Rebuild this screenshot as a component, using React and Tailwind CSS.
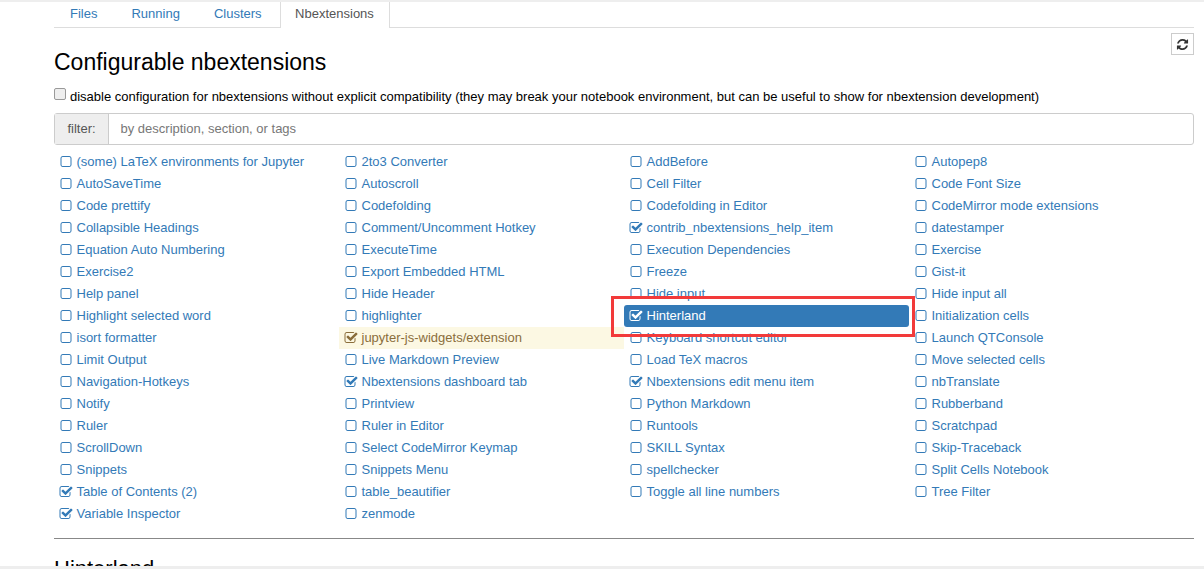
import React from "react";

const cols = [
  ["(some) LaTeX environments for Jupyter","AutoSaveTime","Code prettify","Collapsible Headings","Equation Auto Numbering","Exercise2","Help panel","Highlight selected word","isort formatter","Limit Output","Navigation-Hotkeys","Notify","Ruler","ScrollDown","Snippets","Table of Contents (2)","Variable Inspector"],
  ["2to3 Converter","Autoscroll","Codefolding","Comment/Uncomment Hotkey","ExecuteTime","Export Embedded HTML","Hide Header","highlighter","jupyter-js-widgets/extension","Live Markdown Preview","Nbextensions dashboard tab","Printview","Ruler in Editor","Select CodeMirror Keymap","Snippets Menu","table_beautifier","zenmode"],
  ["AddBefore","Cell Filter","Codefolding in Editor","contrib_nbextensions_help_item","Execution Dependencies","Freeze","Hide input","Hinterland","Keyboard shortcut editor","Load TeX macros","Nbextensions edit menu item","Python Markdown","Runtools","SKILL Syntax","spellchecker","Toggle all line numbers"],
  ["Autopep8","Code Font Size","CodeMirror mode extensions","datestamper","Exercise","Gist-it","Hide input all","Initialization cells","Launch QTConsole","Move selected cells","nbTranslate","Rubberband","Scratchpad","Skip-Traceback","Split Cells Notebook","Tree Filter"],
];
const checked = new Set(["Table of Contents (2)","Variable Inspector","jupyter-js-widgets/extension","Nbextensions dashboard tab","contrib_nbextensions_help_item","Hinterland","Nbextensions edit menu item"]);

const SQUARE = "M1312 256h-832q-66 0-113 47t-47 113v832q0 66 47 113t113 47h832q66 0 113-47t47-113v-832q0-66-47-113t-113-47zm288 160v832q0 119-84.5 203.5t-203.5 84.5h-832q-119 0-203.5-84.5t-84.5-203.5v-832q0-119 84.5-203.5t203.5-84.5h832q119 0 203.5 84.5t84.5 203.5z";
const CHECK = "M1472 930v318q0 119-84.5 203.5t-203.5 84.5h-832q-119 0-203.5-84.5t-84.5-203.5v-832q0-119 84.5-203.5t203.5-84.5h832q63 0 117 25 15 7 18 23 3 17-9 29l-49 49q-10 10-23 10-3 0-9-2-23-6-45-6h-832q-66 0-113 47t-47 113v832q0 66 47 113t113 47h832q66 0 113-47t47-113v-254q0-13 9-22l64-64q10-10 23-10 6 0 12 3 20 8 20 29zm231-489l-814 814q-24 24-57 24t-57-24l-430-430q-24-24-24-57t24-57l110-110q24-24 57-24t57 24l263 263 647-647q24-24 57-24t57 24l110 110q24 24 24 57t-24 57z";
const REFRESH = "M1639 1056q0 5-1 7-64 268-268 434.5t-478 166.5q-146 0-282.5-55t-243.5-157l-129 129q-19 19-45 19t-45-19-19-45v-448q0-26 19-45t45-19h448q26 0 45 19t19 45-19 45l-137 137q71 66 161 102t187 36q134 0 250-65t186-179q11-17 53-117 8-23 30-23h192q13 0 22.5 9.5t9.5 22.5zm25-800v448q0 26-19 45t-45 19h-448q-26 0-45-19t-19-45 19-45l138-138q-148-137-349-137-134 0-250 65t-186 179q-11 17-53 117-8 23-30 23h-199q-13 0-22.5-9.5t-9.5-22.5v-7q65-268 270-434.5t480-166.5q146 0 284 55.5t245 156.5l130-129q19-19 45-19t45 19 19 45z";

function Glyph({ d, className }) {
  return (
    <svg viewBox="0 0 1792 1792" fill="currentColor" className={className}>
      <path d={d} />
    </svg>
  );
}

function Item({ name }) {
  const on = checked.has(name);
  const active = name === "Hinterland";
  const warn = name === "jupyter-js-widgets/extension";
  const tone = active ? "bg-[#337ab7] text-white rounded-[3px]" : warn ? "bg-[#fcf8e3] text-[#8a6d3b]" : "text-[#337ab7]";
  return (
    <div className={`h-[22px] flex items-center pl-[4.5px] text-[13px] leading-[22px] whitespace-nowrap ${tone}`}>
      <span className="w-[18px] shrink-0 flex items-center -mt-[1px]">
        <Glyph d={on ? CHECK : SQUARE} className="w-[14px] h-[14px]" />
      </span>
      <span>{name}</span>
    </div>
  );
}

export default function App() {
  return (
    <div className="relative w-[1204px] h-[569px] overflow-hidden bg-white border-t-2 border-[#eeeeee] font-['Liberation_Sans',Arial,sans-serif] text-black">
      <div className="ml-[54px] w-[1140px]">
        <div className="flex h-[26px] border-b border-[#dddddd] text-[13px] text-[#337ab7]">
          <div className="pl-[16px] pr-[17px] pt-[2px]">Files</div>
          <div className="px-[17px] pt-[2px]">Running</div>
          <div className="px-[17px] pt-[2px]">Clusters</div>
          <div className="ml-[1.5px] h-[26px] pl-[14px] pr-[15px] pt-[2px] bg-white border-x border-[#dddddd] text-[#555555]">Nbextensions</div>
        </div>
        <div className="flex justify-end pt-[5px] h-[27px]">
          <div className="w-[23px] h-[22px] border border-[#cccccc] flex items-center justify-center text-[#333333]">
            <Glyph d={REFRESH} className="w-[13px] h-[13px]" />
          </div>
        </div>
        <h1 className="m-0 text-[23px] leading-[28px] font-normal -mt-[7px]">Configurable nbextensions</h1>
        <div className="flex items-center mt-[12px] h-[18px] text-[13px]">
          <span className="w-[12px] h-[12px] -mt-[6px] rounded-[2px] border border-[#999999] bg-[#eeeeee] mr-[4px]" />
          <span>disable configuration for nbextensions without explicit compatibility (they may break your notebook environment, but can be useful to show for nbextension development)</span>
        </div>
        <div className="flex h-[32px] mt-[7px] border border-[#cccccc] rounded-[3px] text-[13px]">
          <div className="w-[54px] bg-[#eeeeee] border-r border-[#cccccc] text-[#555555] flex items-center justify-center">filter:</div>
          <div className="pl-[11.5px] text-[#777777] flex items-center">by description, section, or tags</div>
        </div>
        <div className="grid grid-cols-[285px_285px_285px_285px] mt-[6px]">
          {cols.map((c, i) => (
            <div key={i}>{c.map((n) => <Item key={n} name={n} />)}</div>
          ))}
        </div>
        <hr className="mt-[13px] border-t border-[#888888]" />
        <h2 className="m-0 mt-[17px] text-[22px] leading-[26px] font-normal">Hinterland</h2>
      </div>
      <div className="absolute left-0 right-0 bottom-0 h-[3px] bg-[#eeeeee]" />
      <div className="absolute left-[611px] top-[294px] w-[304px] h-[41px] border-[3px] border-[#f23a3a]" />
    </div>
  );
}
